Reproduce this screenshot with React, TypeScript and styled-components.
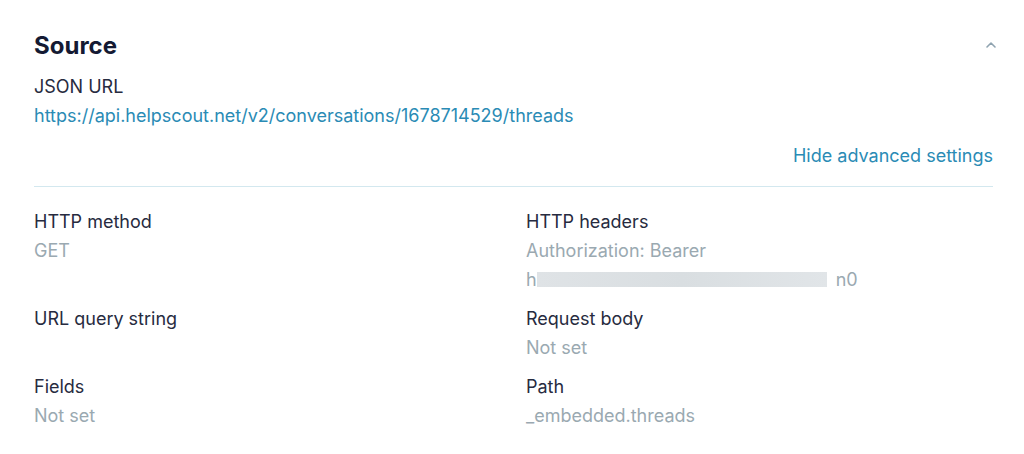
import React from "react";
import styled, { createGlobalStyle } from "styled-components";

interface Field {
    label: string;
    values: string[];
    // token shown masked: first and last chars kept
    secret?: [string, string];
}

const leftFields: Field[] = [
    { label: "HTTP method", values: ["GET"] },
    { label: "URL query string", values: [] },
    { label: "Fields", values: ["Not set"] },
];

const rightFields: Field[] = [
    { label: "HTTP headers", values: ["Authorization: Bearer"], secret: ["h", "n0"] },
    { label: "Request body", values: ["Not set"] },
    { label: "Path", values: ["_embedded.threads"] },
];

const FieldItem: React.FC<{ field: Field }> = ({ field: { label, values, secret } }) => (
    <Item>
        <Label>{label}</Label>
        {values.map((v, j) => (
            <Value key={j}>{v}</Value>
        ))}
        {secret && (
            <Value>
                {secret[0]}
                <Redacted />
                {secret[1]}
            </Value>
        )}
    </Item>
);

const App: React.FC = () => {
    return (
        <>
            <GlobalStyle />
            <Panel>
                <Header>
                    <Title>Source</Title>
                    <Toggle aria-label="collapse">
                        <svg width="12" height="8" viewBox="0 0 12 8" fill="none">
                            <path d="M2 6l4-4 4 4" stroke="#8fa3b0" strokeWidth="1.6" strokeLinecap="round" strokeLinejoin="round" />
                        </svg>
                    </Toggle>
                </Header>
                <Label>JSON URL</Label>
                <Link href="#">https://api.helpscout.net/v2/conversations/1678714529/threads</Link>
                <AdvancedRow>
                    <Link href="#">Hide advanced settings</Link>
                </AdvancedRow>
                <Divider />
                <Grid>
                    {[0, 1, 2].map(i => (
                        <React.Fragment key={i}>
                            <FieldItem field={leftFields[i]} />
                            <FieldItem field={rightFields[i]} />
                        </React.Fragment>
                    ))}
                </Grid>
            </Panel>
        </>
    );
};

const GlobalStyle = createGlobalStyle`
    body {
        margin: 0;
        background: #ffffff;
        font-family: Inter, Roboto, "Liberation Sans", sans-serif;
    }
`;

const Panel = styled.div`
    padding: 29px 31px 0 34px;
`;

const Header = styled.div`
    display: flex;
    justify-content: space-between;
    align-items: center;
    height: 32px;
    margin-bottom: 11px;
`;

const Title = styled.h2`
    margin: 0;
    font-size: 24px;
    font-weight: 700;
    color: #141a33;
`;

const Toggle = styled.button`
    border: 0;
    background: none;
    padding: 0;
    margin-right: -4px;
    display: flex;
    cursor: pointer;
`;

const Label = styled.div`
    font-size: 18px;
    line-height: 29px;
    color: #272b40;
`;

const Value = styled.div`
    font-size: 18px;
    line-height: 29px;
    color: #9aa9b1;
    display: flex;
    align-items: center;
`;

const Link = styled.a`
    display: block;
    font-size: 18px;
    line-height: 29px;
    color: #2a8bb5;
    text-decoration: none;
`;

const AdvancedRow = styled.div`
    display: flex;
    justify-content: flex-end;
    margin-top: 11px;
`;

const Divider = styled.hr`
    border: 0;
    border-top: 1px solid #d3e8ef;
    margin: 16px 0 20px;
`;

const Grid = styled.div`
    display: grid;
    grid-template-columns: 492px 1fr;
    row-gap: 10px;
`;

const Item = styled.div`
    display: flex;
    flex-direction: column;
`;

const Redacted = styled.span`
    display: inline-block;
    width: 290px;
    height: 15px;
    margin: 0 9px 0 0;
    background: linear-gradient(90deg, #dfe3e6, #d9dee1 50%, #e1e5e8);
`;

export default App;
